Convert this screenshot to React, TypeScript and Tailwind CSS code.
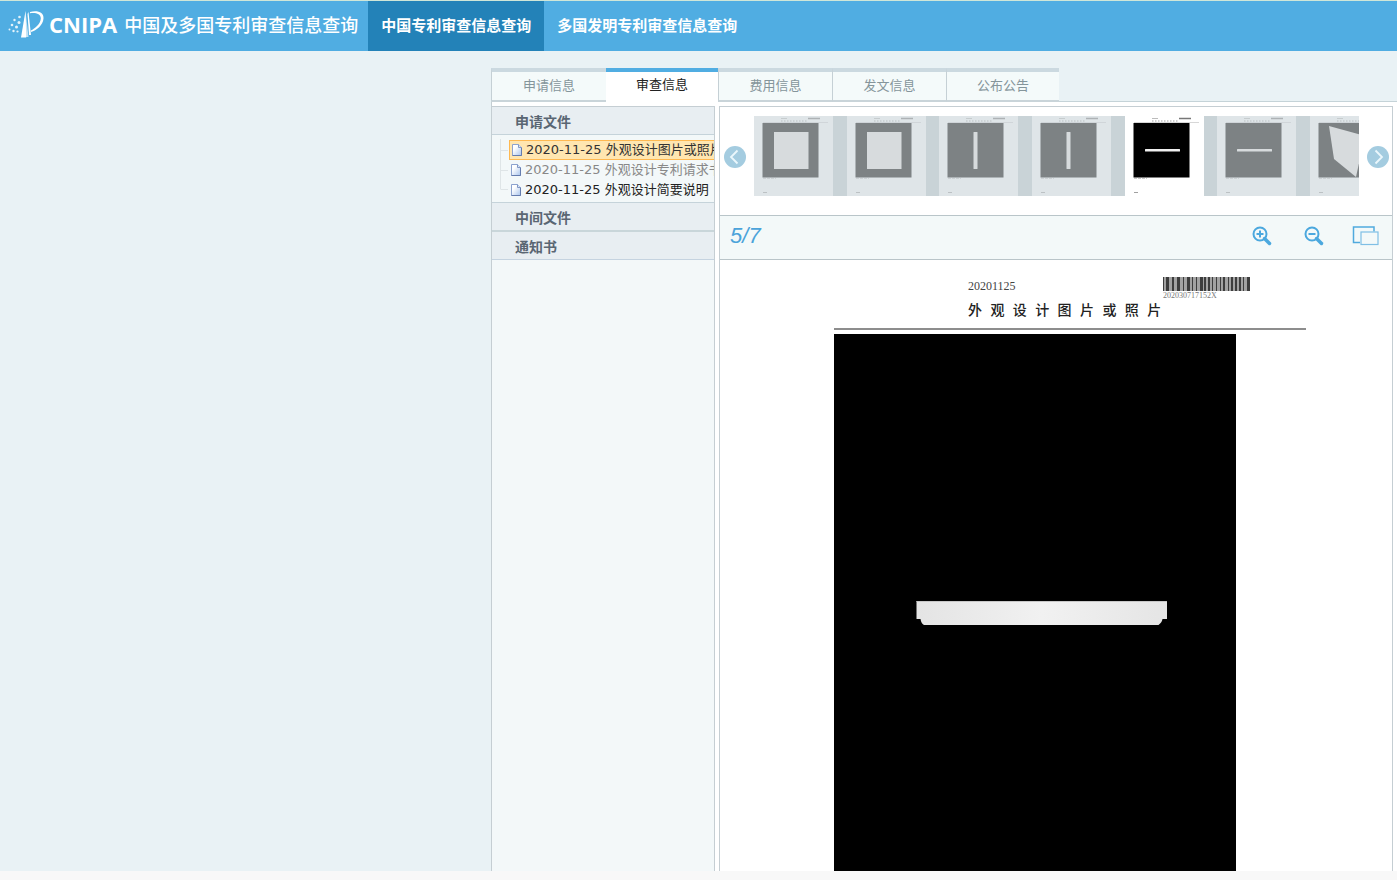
import { useState } from "react";
import { clsx } from "clsx";

const sections = ["中国专利审查信息查询", "多国发明专利审查信息查询"];
const tabs = ["申请信息", "审查信息", "费用信息", "发文信息", "公布公告"];

type FileItem = { date: string; name: string; tone: "selected" | "muted" | "normal" };

const files: FileItem[] = [
  { date: "2020-11-25", name: "外观设计图片或照片", tone: "selected" },
  { date: "2020-11-25", name: "外观设计专利请求书", tone: "muted" },
  { date: "2020-11-25", name: "外观设计简要说明", tone: "normal" },
];

type ThumbKind = "square" | "vertical" | "horizontal" | "perspective";

const thumbs: ThumbKind[] = ["square", "square", "vertical", "vertical", "horizontal", "horizontal", "perspective"];

// bar start and width, in a 87 unit wide box
const barcode = [
  [0, 1], [3, 3], [9, 2], [14, 3], [20, 1], [24, 3], [29, 1], [33, 1], [37, 3], [41, 2], [45, 2], [49, 1], [53, 1],
  [57, 1], [60, 2], [65, 1], [68, 2], [72, 2], [76, 2], [80, 1], [84, 3],
];

function Logo() {
  return (
    <svg width="36" height="30" viewBox="0 0 36 30" className="shrink-0" aria-hidden="true">
      <path d="M17.5 2 L20.5 28 H15.2 Z" fill="white" fillOpacity="0.65" />
      <path d="M17.5 2 L18.2 28.5 H13 Z" fill="white" />
      <path d="M20.5 3 L23 26 H21 L19.5 5 Z" fill="white" />
      <path
        d="M22 3 C29 1 36 3 35.5 9.5 C35 16 28.500 21.500 23 23 L22.800 21.500 C27 19.500 32.500 15 32.800 9.500 C33 4.500 27 3.200 22 4.200 Z"
        fill="white"
      />
      <g fill="white" fillOpacity="0.85">
        <circle cx="11.500" cy="8" r="1.300" />
        <circle cx="6.500" cy="11" r="1.200" />
        <circle cx="11" cy="13.500" r="1.500" />
        <circle cx="4" cy="16" r="1.300" />
        <circle cx="8.500" cy="18" r="1.500" />
        <circle cx="1.500" cy="20.500" r="1" />
        <circle cx="5.500" cy="22" r="1.200" />
        <circle cx="9.500" cy="22.500" r="1.100" />
      </g>
    </svg>
  );
}

function Header() {
  return (
    <header className="flex h-[51px] shrink-0 border-t border-[#cfe6d8] bg-[#50ade2] text-white">
      <a href="#home" className="flex items-center pb-1 pl-[8px]">
        <Logo />
        <span className="ml-[5px] font-['Open_Sans'] text-[22px] leading-6 font-bold">CNIPA</span>
        <span className="ml-[7px] w-[244px] pt-[3px] text-[18px] leading-6 font-medium whitespace-nowrap">中国及多国专利审查信息查询</span>
      </a>
      <nav className="flex text-[15px] font-bold whitespace-nowrap">
        {sections.map((section, i) => (
          <a
            key={section}
            href={`#section-${i + 1}`}
            className={clsx("flex items-center px-[13px]", i === 0 && "bg-[#2382b8]")}
          >
            {section}
          </a>
        ))}
      </nav>
    </header>
  );
}

function FileIcon() {
  return (
    <svg width="12" height="14" viewBox="0 0 12 14" className="shrink-0" aria-hidden="true">
      <defs>
        <linearGradient id="sheet" x1="0" y1="0" x2="1" y2="1">
          <stop offset="0.3" stopColor="#ffffff" />
          <stop offset="1" stopColor="#a9c4ec" />
        </linearGradient>
      </defs>
      <path d="M1.500 1.500 H7.500 L10.500 4.500 V12.500 H1.500 Z" fill="url(#sheet)" stroke="#8da3cf" />
      <path d="M10.500 4.500 V12.500 H1.500" fill="none" stroke="#657cae" />
      <path d="M7.500 1.500 V4.500 H10.500" fill="#dce8fa" stroke="#8298c4" />
    </svg>
  );
}

function Sidebar() {
  const heading = "flex w-full items-center bg-[#e8eef2] pt-[2px] pl-[23px] text-[14px] leading-5 font-bold text-[#5a6673]";

  return (
    <aside className="w-[223px] shrink-0 overflow-hidden border-x border-t border-[#c5ced3] bg-[#f3f8f9] font-['DejaVu_Sans','Noto_Sans_CJK_SC',sans-serif]">
      <button type="button" className={clsx(heading, "h-[27px]")}>申请文件</button>
      <div className="relative h-[69px] border-y border-[#c5d3da] pt-[5px]">
        <ul className="text-[13px] whitespace-nowrap">
          {files.map((file) => (
            <li key={file.name} className="flex pl-[17px]">
              <a
                href={`#${file.name}`}
                className={clsx(
                  "flex h-5 flex-1 items-center gap-[3px] border leading-[18px]",
                  file.tone === "selected" && "border-[#ffb951] bg-[#ffe6b0] pl-px text-[#333]",
                  file.tone === "muted" && "border-transparent text-[#888]",
                  file.tone === "normal" && "border-transparent text-[#222]",
                )}
              >
                <FileIcon />
                {file.date} {file.name}
              </a>
            </li>
          ))}
        </ul>
        <svg width="10" height="52" viewBox="0 0 10 52" className="absolute top-[4px] left-[7px]" aria-hidden="true">
          <path d="M1.500 0 V50.500 M2 11.500 H9 M2 31.500 H9 M2 50.500 H9" stroke="#dfe5e7" fill="none" />
        </svg>
      </div>
      <button type="button" className={clsx(heading, "h-[29px] border-b-2 border-[#c9d6da]")}>中间文件</button>
      <button type="button" className={clsx(heading, "h-[28px] border-b border-[#c5d3e0]")}>通知书</button>
    </aside>
  );
}

function Thumb({ kind, active }: { kind: ThumbKind; active: boolean }) {
  const page = active ? "#ffffff" : "#dfe5e8";
  const frame = active ? "#000000" : "#7d8284";
  const shape = active ? "#f0f0f0" : "#d7dbdd";
  const ink = active ? "#777777" : "#adb2b5";

  return (
    <svg width="79" height="80" viewBox="0 0 79 80" className="shrink-0" aria-hidden="true">
      <rect width="79" height="80" fill={page} />
      <path d="M54 2.500 H66" stroke={ink} strokeWidth="1.500" />
      <path d="M27 2.500 H33" stroke={ink} strokeWidth="0.500" />
      <path d="M27 5 H54" stroke={ink} strokeWidth="0.700" strokeDasharray="1.500 1.500" />
      <path d="M9 6.500 H74" stroke={ink} strokeWidth="0.300" />
      <rect x="8.500" y="7" width="56" height="54.500" fill={frame} />
      <path d="M9 76.500 H13" stroke={ink} strokeWidth="0.700" />
      <path d="M9 62.500 H22" stroke={ink} strokeWidth="0.400" strokeDasharray="3 1" />
      {kind === "square" && <rect x="20" y="16" width="34.500" height="37" fill={shape} />}
      {kind === "vertical" && <rect x="34.500" y="16" width="4" height="37" rx="0.500" fill={shape} />}
      {kind === "horizontal" && <rect x="20" y="33" width="35" height="2.500" rx="0.500" fill={shape} />}
      {kind === "perspective" && <path d="M19 10 L55 20 L46 61 L24 43 Z" fill={shape} />}
    </svg>
  );
}

function ArrowButton({ direction, onClick }: { direction: "left" | "right"; onClick: () => void }) {
  return (
    <button type="button" onClick={onClick} aria-label={direction} className="shrink-0">
      <svg width="22" height="22" viewBox="0 0 22 22">
        <circle cx="11" cy="11" r="11" fill="#a4cce0" />
        <path
          d={direction === "left" ? "M13.500 4.500 L7 11 L13.500 17.500" : "M8.500 4.500 L15 11 L8.500 17.500"}
          fill="none"
          stroke="#ebf7fc"
          strokeWidth="1.800"
        />
      </svg>
    </button>
  );
}

function ZoomIcon({ plus }: { plus: boolean }) {
  return (
    <svg width="20" height="20" viewBox="0 0 20 20" fill="none" stroke="#4ba8de" aria-hidden="true">
      <circle cx="8" cy="8" r="6.500" strokeWidth="2" />
      <path d={plus ? "M4.500 8 H11.500 M8 4.500 V11.500" : "M4.500 8 H11.500"} strokeWidth="2" />
      <path d="M12.500 12.500 L17.500 17.500" strokeWidth="3.500" strokeLinecap="round" />
    </svg>
  );
}

function DocumentPage() {
  return (
    <article className="flex min-h-0 flex-1 flex-col pl-[114px]">
      <div className="w-[472px] shrink-0 border-b-2 border-[#8d8d8d] pl-[134px]">
        <div className="flex h-10 items-start pt-[17px] font-['Liberation_Serif','Noto_Sans_CJK_SC',serif]">
          <span className="w-[195px] pt-px text-[12px] leading-4 text-[#444]">20201125</span>
          <div className="flex flex-col">
            <svg width="87" height="14" viewBox="0 0 87 14" aria-hidden="true">
              <rect width="87" height="14" fill="#a2a2a2" />
              {barcode.map(([x, width]) => (
                <rect key={x} x={x} y="0" width={width} height="14" fill="#3d3d3d" />
              ))}
            </svg>
            <span className="text-[8px] leading-[9px] text-[#777]">202030717152X</span>
          </div>
        </div>
        <h1 className="h-7 font-['Liberation_Mono','Noto_Sans_CJK_SC',monospace] text-[14px] leading-[22px] font-medium whitespace-nowrap text-[#222]">
          外 观 设 计 图 片 或 照 片
        </h1>
      </div>
      <div className="mt-1 min-h-0 w-[402px] flex-1 overflow-hidden bg-black pt-[266px] pl-[82px]">
        <svg width="252" height="26" viewBox="0 0 252 26" aria-hidden="true">
          <defs>
            <linearGradient id="lamp" x1="0" y1="0" x2="1" y2="0">
              <stop offset="0" stopColor="#e4e4e4" />
              <stop offset="0.500" stopColor="#f1f1f1" />
              <stop offset="1" stopColor="#e5e5e5" />
            </linearGradient>
          </defs>
          <path d="M0.500 1 H251 V19 H246.500 C246 22 244.500 23 242.500 25 H8 C6 24 5 22 4.500 19 H0.500 Z" fill="url(#lamp)" />
          <path d="M0.500 1.500 H251" stroke="#c7c7c7" fill="none" />
        </svg>
      </div>
    </article>
  );
}

function Viewer() {
  const [current, setCurrent] = useState(4);

  return (
    <section className="flex min-w-0 flex-1 flex-col overflow-hidden border-x border-t border-[#c5ced3] bg-white">
      <div className="flex h-[108px] shrink-0 gap-2 pt-[9px] pr-[3px] pl-1">
        <div className="flex h-[82px] items-center">
          <ArrowButton direction="left" onClick={() => setCurrent(Math.max(0, current - 1))} />
        </div>
        <div className="flex h-20 min-w-0 flex-1 overflow-hidden bg-[#c9d3d7]">
          {thumbs.map((kind, i) => (
            <button
              key={i}
              type="button"
              aria-label={`${i + 1}`}
              onClick={() => setCurrent(i)}
              className="w-[93px] shrink-0 nth-[3n+2]:w-[92px]"
            >
              <Thumb kind={kind} active={i === current} />
            </button>
          ))}
        </div>
        <div className="flex h-[82px] items-center">
          <ArrowButton direction="right" onClick={() => setCurrent(Math.min(thumbs.length - 1, current + 1))} />
        </div>
      </div>
      <div className="flex h-[45px] shrink-0 items-center border-y border-[#b9c5c9] bg-[#f3f9f9] pr-[13px] pb-1 pl-[10px]">
        <span className="text-[22px] leading-6 text-[#4ba3da] italic">
          {current + 1}/{thumbs.length}
        </span>
        <div className="ml-auto flex items-center gap-8">
          <button type="button" aria-label="放大">
            <ZoomIcon plus />
          </button>
          <button type="button" aria-label="缩小">
            <ZoomIcon plus={false} />
          </button>
          <button type="button" aria-label="全屏" className="-ml-1">
            <svg width="27" height="20" viewBox="0 0 27 20" fill="none" stroke="#50aade">
              <path d="M8 16.500 H1.500 V1 H22 V5.500" strokeWidth="1.500" />
              <rect x="9" y="6" width="17" height="12.500" fill="#f3f9f9" stroke="#7fbfe5" strokeWidth="1.200" />
            </svg>
          </button>
        </div>
      </div>
      <DocumentPage />
    </section>
  );
}

function Tabs() {
  const [active, setActive] = useState(1);

  return (
    <div role="tablist" className="flex h-[34px] shrink-0 border-b border-[#c5d3d8] bg-[#e9f2f5] text-[13px]">
      {tabs.map((tab, i) => (
        <button
          key={tab}
          type="button"
          role="tab"
          aria-selected={i === active}
          onClick={() => setActive(i)}
          className={clsx(
            "-mb-px h-[34px] shrink-0 border-t-4",
            i === 0 && "w-[115px]",
            i === 1 && "w-[112px]",
            i > 1 && "w-[114px] last:w-[113px]",
            i === active
              ? "border-t-[#50ade2] bg-white pb-1 text-[#222]"
              : "border-b-2 border-l border-b-[#c9d4d9] border-l-[#c5d0d5] border-t-[#cbd9e0] bg-[#f4fafa] text-[#85959b]",
          )}
        >
          {tab}
        </button>
      ))}
    </div>
  );
}

export default function App() {
  return (
    <div className="flex h-screen flex-col overflow-hidden bg-[#f8f8f8] font-['Liberation_Sans','Noto_Sans_CJK_SC',sans-serif]">
      <Header />
      <main className="flex min-h-0 flex-1 bg-[#e9f2f5] pt-[17px]">
        <div className="w-[491px] shrink-0" />
        <div className="flex min-w-0 flex-1 flex-col bg-white">
          <Tabs />
          <div className="flex min-h-0 flex-1 gap-1 border-l border-[#c5ced3] pt-1 pr-1 [&>aside]:border-l-0">
            <Sidebar />
            <Viewer />
          </div>
        </div>
      </main>
      <footer className="h-[9px] shrink-0 bg-[#f8f8f8]" />
    </div>
  );
}
